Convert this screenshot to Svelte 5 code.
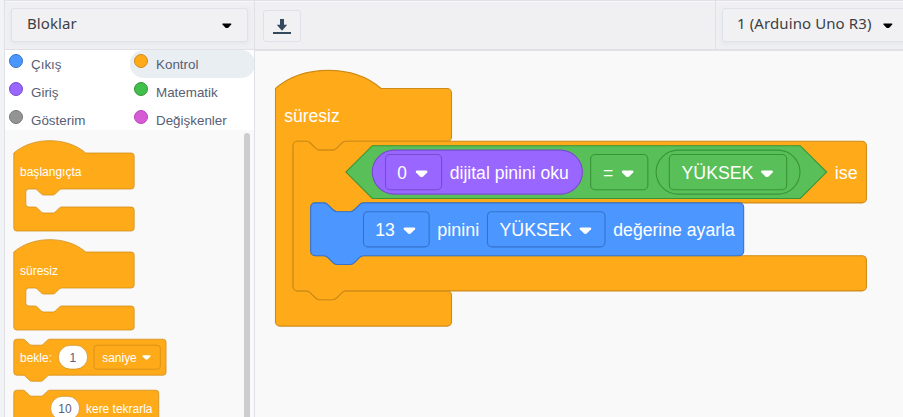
<script>
  const categories = [
    { name: 'Çıkış', fill: '#4c97ff', edge: '#3373cc' },
    { name: 'Kontrol', fill: '#ffab19', edge: '#cf8b17', active: true },
    { name: 'Giriş', fill: '#9966ff', edge: '#774dcb' },
    { name: 'Matematik', fill: '#40bf4a', edge: '#389438' },
    { name: 'Gösterim', fill: '#949494', edge: '#777777' },
    { name: 'Değişkenler', fill: '#d65cd6', edge: '#bd42bd' }
  ];

  // Block outlines use 4-unit grid steps; the groups scale them to screen size.
  const notch = 'c2,0 3,1 4,2 l4,4 c1,1 2,2 4,2 h12 c2,0 3,-1 4,-2 l4,-4 c1,-1 2,-2 4,-2';
  const notchBack = 'c-2,0 -3,1 -4,2 l-4,4 c-1,1 -2,2 -4,2 h-12 c-2,0 -3,-1 -4,-2 l-4,-4 c-1,-1 -2,-2 -4,-2';
  const hat = (w, mouth) =>
    `M0,0 c25,-22 71,-22 96,0 H${w - 4} a4,4 0 0 1 4,4 v40 a4,4 0 0 1 -4,4 H64 ${notchBack} h-8 a4,4 0 0 0 -4,4 v${mouth - 8} a4,4 0 0 0 4,4 h8 ${notch} H${w - 4} a4,4 0 0 1 4,4 v24 a4,4 0 0 1 -4,4 H4 a4,4 0 0 1 -4,-4 z`;
  const stack = (w, h) =>
    `M0,4 a4,4 0 0 1 4,-4 h8 ${notch} H${w - 4} a4,4 0 0 1 4,4 v${h - 8} a4,4 0 0 1 -4,4 H48 ${notchBack} h-8 a4,4 0 0 1 -4,-4 z`;
  const condition =
    `M0,4 a4,4 0 0 1 4,-4 h8 ${notch} H517.2 a4,4 0 0 1 4,4 v48 a4,4 0 0 1 -4,4 H64 ${notchBack} h-8 a4,4 0 0 0 -4,4 v40 a4,4 0 0 0 4,4 h8 ${notch} H517.2 a4,4 0 0 1 4,4 v24 a4,4 0 0 1 -4,4 H48 ${notchBack} h-8 a4,4 0 0 1 -4,-4 z`;
</script>

{#snippet label(x, y, w, value)}
  <text {x} {y} textLength={w} lengthAdjust="spacingAndGlyphs">{value}</text>
{/snippet}

{#snippet caret(x, y, s = 1)}
  <path class="caret" transform="translate({x} {y}) scale({s})" d="M1.3,0 H10.7 Q12.5,.2 11.6,1.8 L7.6,5.8 Q6,7.2 4.4,5.8 L.4,1.8 Q-.5,.2 1.3,0z" />
{/snippet}

<div class="app">
  <header>
    <div class="left-tools">
      <div class="select blocks"><span>Bloklar</span><svg width="10" height="6" viewBox="0 0 10 6"><path d="M.5,.5 H9.2 V1.5 L6.5,4.4 Q4.8,5.5 3.2,4.4 L.5,1.5z" /></svg></div>
    </div>
    <div class="main-tools">
      <button class="download" aria-label="download">
        <svg width="18" height="16" viewBox="0 0 18 16"><path d="M7,0 h4 v5.7 h3.2 L9,11.8 3.8,5.7 H7z M0,13 H18 V15 H0z" /></svg>
      </button>
    </div>
    <div class="board-tools">
      <div class="select board"><span>1 (Arduino Uno R3)</span><svg width="10" height="6" viewBox="0 0 10 6"><path d="M.5,.5 H9.2 V1.5 L6.5,4.4 Q4.8,5.5 3.2,4.4 L.5,1.5z" /></svg></div>
    </div>
  </header>

  <main>
    <aside>
      <div class="categories">
        {#each categories as c}
          <div class="category" class:active={c.active}>
            <i style="background:{c.fill};border-color:{c.edge}"></i><span>{c.name}</span>
          </div>
        {/each}
      </div>
      <div class="flyout">
        <svg class="small" width="238" height="287" viewBox="5 130 238 287">
          <g class="control">
            <path transform="translate(13.8 153) scale(.75)" d={hat(160.5, 24)} />
            <path transform="translate(13.8 252) scale(.75)" d={hat(160.5, 24)} />
            <path transform="translate(13.8 339.2) scale(.75)" d={stack(203, 48)} />
            <path transform="translate(13.8 390.2) scale(.75)" d={stack(193.3, 80)} />
            <rect x="94" y="345.2" width="66.3" height="24" rx="3" />
          </g>
          <rect class="input" x="58.4" y="345.3" width="29.2" height="23.8" rx="11.9" />
          <rect class="input" x="50.6" y="396.3" width="29" height="23.8" rx="11.9" />
          {@render label(20, 176, 61.5, 'başlangıçta')}
          {@render label(20, 275, 38, 'süresiz')}
          {@render label(20, 362.2, 32, 'bekle:')}
          {@render label(102.3, 362.2, 34.4, 'saniye')}
          {@render label(86, 413, 66.5, 'kere tekrarla')}
          <g class="value">
            {@render label(69.5, 362.2, 6.7, '1')}
            {@render label(58.3, 413, 13.3, '10')}
          </g>
          {@render caret(142.3, 355.2, 0.7)}
        </svg>
        <div class="scrollbar"></div>
      </div>
    </aside>

    <section class="workspace">
      <svg width="648" height="366" viewBox="255 51 648 366">
        <g class="large" transform="translate(275.5 88.5) scale(1.1)">
          <path class="orange" d={hat(160, 136)} />
          <path class="orange" transform="translate(16 48)" d={condition} />
          <path class="green" d="M88,52 H477 L501,76 477,100 H88 L64,76z" />
          <rect class="purple" x="88" y="56" width="191" height="40" rx="20" />
          <rect class="purple" x="100" y="60" width="51" height="32" rx="4" />
          <rect class="green" x="286.5" y="60" width="52" height="32" rx="4" />
          <rect class="green" x="346" y="56" width="130.8" height="40" rx="20" />
          <rect class="green" x="358" y="60" width="106.7" height="32" rx="4" />
          <path class="blue" transform="translate(32 104)" d={stack(393.6, 48)} />
          <rect class="blue" x="80" y="112" width="59.7" height="32" rx="4" />
          <rect class="blue" x="192.7" y="112" width="106.8" height="32" rx="4" />
        </g>
        {@render label(284.2, 122, 55.6, 'süresiz')}
        {@render label(397.3, 179, 9.6, '0')}
        {@render label(449.8, 179, 119, 'dijital pinini oku')}
        {@render label(603, 179, 10.3, '=')}
        {@render label(681.5, 179, 72, 'YÜKSEK')}
        {@render label(834.8, 179, 22.9, 'ise')}
        {@render label(375.2, 236, 19.6, '13')}
        {@render label(437.2, 236, 42, 'pinini')}
        {@render label(499.5, 236, 72, 'YÜKSEK')}
        {@render label(613.3, 236, 121.5, 'değerine ayarla')}
        {@render caret(415.6, 170.6)}
        {@render caret(621.6, 170.6)}
        {@render caret(761, 170.6)}
        {@render caret(403.4, 227.4)}
        {@render caret(579.4, 227.4)}
      </svg>
    </section>
  </main>
</div>

<style>
  :global(body) { background: #f2f3f7; overflow: hidden; }
  .app { box-sizing: border-box; width: 903px; height: 417px; display: flex; flex-direction: column; padding-left: 4px; overflow: hidden; font-family: "Noto Sans", sans-serif; }
  header { box-sizing: border-box; height: 51px; flex: none; display: flex; background: #f0f0f3; border-top: 1px solid #dfe1e7; border-bottom: 2px solid #dfe1e7; box-shadow: inset 0 1px #f8f8fa; }
  .left-tools { box-sizing: border-box; width: 251px; border: solid #dfe1e7; border-width: 0 1px; padding: 7px 6px; }
  .select { box-sizing: border-box; height: 34px; display: flex; align-items: center; justify-content: space-between; border: 1px solid #dfe2e8; border-radius: 3px; background: #f1f1f4; box-shadow: 0 2px 4px #d9dde680; font-size: 15px; color: #3c4043; white-space: nowrap; }
  .select span { position: relative; top: -2px; }
  .select svg { position: relative; top: 1px; fill: #000; }
  .blocks { width: 237px; padding: 0 15px 0 15px; }
  .blocks span { letter-spacing: .1px; }
  .main-tools { flex: 1; padding: 9px 8px; }
  .download { box-sizing: border-box; display: flex; align-items: center; justify-content: center; width: 38px; height: 32px; padding: 2px 0 0; border: 1px solid #dfe2e8; border-radius: 3px; background: #f1f1f4; }
  .download svg { fill: #34495e; }
  .board-tools { box-sizing: border-box; width: 188px; flex: none; padding: 7px 0 0 6px; border-left: 1px solid #dfe1e7; overflow: hidden; }
  .board { width: 200px; padding: 0 28px 0 14px; }
  .board span { letter-spacing: .1px; }
  main { display: flex; flex: 1; min-height: 0; }
  aside { box-sizing: border-box; width: 251px; flex: none; margin-top: -1px; border: solid #dfe1e7; border-width: 0 1px; display: flex; flex-direction: column; }
  .categories { height: 80px; flex: none; background: #fff; display: grid; grid-template-columns: 125px 125px; grid-auto-rows: 28px; overflow: hidden; margin-right: -1px; border-right: 1px solid #dfe1e7; }
  .category { display: flex; align-items: flex-start; gap: 8px; padding: 4px 0 0 4px; font-family: "Liberation Sans", sans-serif; font-size: 13.4px; color: #575e75; border-radius: 14px; }
  .category span { line-height: 22px; }
  .category i { box-sizing: border-box; width: 14px; height: 14px; border: 1px solid; border-radius: 50%; }
  .active { background: #e9eef2; }
  .flyout { flex: 1; min-height: 0; background: #f9f9f9; display: flex; justify-content: space-between; }
  .scrollbar { width: 6px; height: 300px; margin: 3px 4px 0 0; border-radius: 3px; background: #cecdce; }
  .workspace { flex: 1; background: #f9f9f9; }
  svg { display: block; }
  svg text { font-family: "Liberation Sans", sans-serif; font-size: 17.6px; fill: #fff; }
  .small text { font-size: 12px; }
  .small .value text { fill: #575e75; }
  .control > * { fill: #ffab19; stroke: #cf8b17; stroke-width: 1; }
  .control rect { stroke-width: .75; }
  .input { fill: #fff; stroke: #cf8b17; stroke-width: .75; }
  .orange { fill: #ffab19; stroke: #cf8b17; }
  .green { fill: #59c059; stroke: #389438; }
  .purple { fill: #9966ff; stroke: #774dcb; }
  .blue { fill: #4c97ff; stroke: #3373cc; }
  .caret { fill: #fff; }
</style>
